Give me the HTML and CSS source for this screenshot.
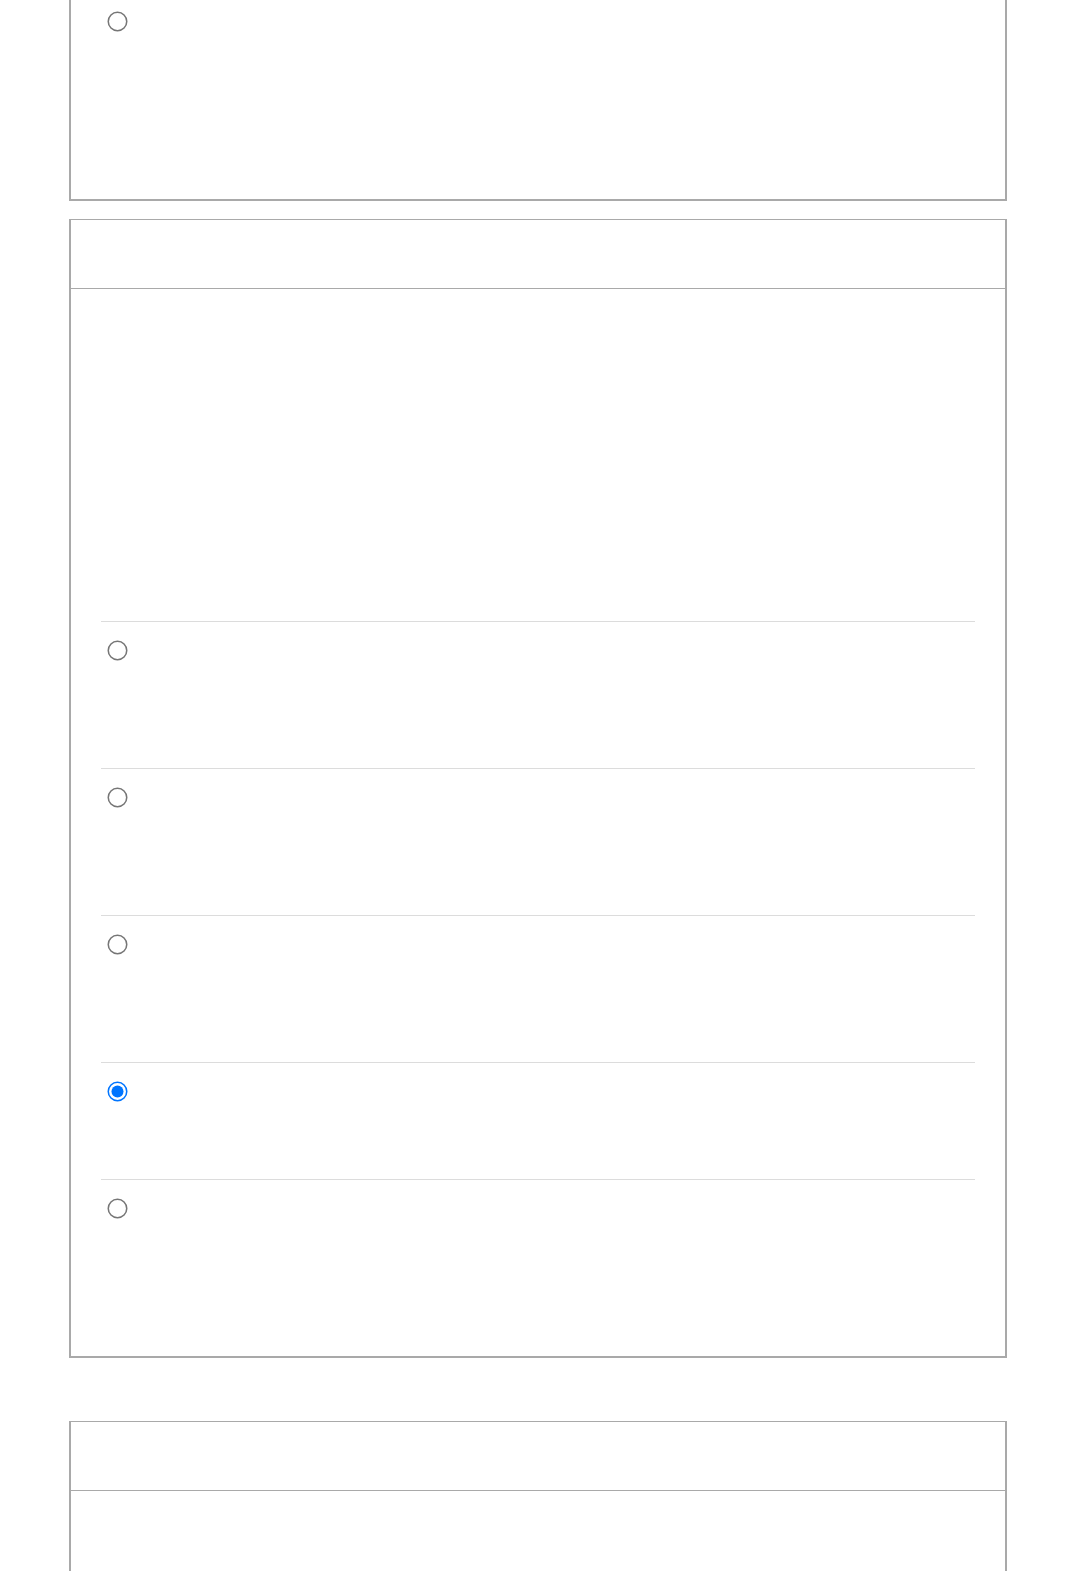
FILE: index.html
```html
<!DOCTYPE html>
<html lang="en">
<head>
  <meta charset="UTF-8">
  <meta name="viewport" content="width=device-width, initial-scale=1.0">
  <title>Quiz</title>
  <link rel="stylesheet" href="styles.css">
</head>
<body>
  <div class="page">
    <div class="card card-cut">
      <div class="option option-first">
        <input type="radio" name="q0">
      </div>
    </div>

    <div class="card">
      <div class="card-head"></div>
      <div class="card-body">
        <div class="question"></div>
        <label class="option"><input type="radio" name="q1"></label>
        <label class="option"><input type="radio" name="q1"></label>
        <label class="option"><input type="radio" name="q1"></label>
        <label class="option option-short"><input type="radio" name="q1" checked></label>
        <label class="option option-last"><input type="radio" name="q1"></label>
      </div>
    </div>

    <div class="card card-next">
      <div class="card-head"></div>
      <div class="card-body"></div>
    </div>
  </div>
</body>
</html>
```

FILE: styles.css
```css
body {
  margin: 0;
  padding: 0;
  background: #fff;
  font-family: "Liberation Sans", Arial, sans-serif;
}
.page {
  width: 938px;
  margin: 0 auto;
  padding-bottom: 40px;
}
.card {
  border-style: solid;
  border-color: #a9a9a9;
  border-width: 1px 2px 2px 2px;
  margin-bottom: 18px;
}
.card-cut {
  border-top: none;
  padding: 0 30px;
  height: 199px;
}
.card-next {
  margin-top: 63px;
  margin-bottom: 0;
  height: 300px;
}
.card-head {
  height: 68px;
  border-bottom: 1px solid #a9a9a9;
}
.card-body {
  padding: 0 30px;
}
.question {
  height: 332px;
}
.option {
  display: block;
  height: 147px;
  border-top: 1px solid #dcdcdc;
  padding: 18px 0 0 6px;
  box-sizing: border-box;
  cursor: pointer;
}
.option-first {
  border-top: none;
  padding-top: 11px;
}
.option-short {
  height: 117px;
}
.option-last {
  height: 177px;
}
.option input {
  display: block;
  width: 13px;
  height: 13px;
  margin: 3.5px;
  transform: scale(1.54);
}
```
